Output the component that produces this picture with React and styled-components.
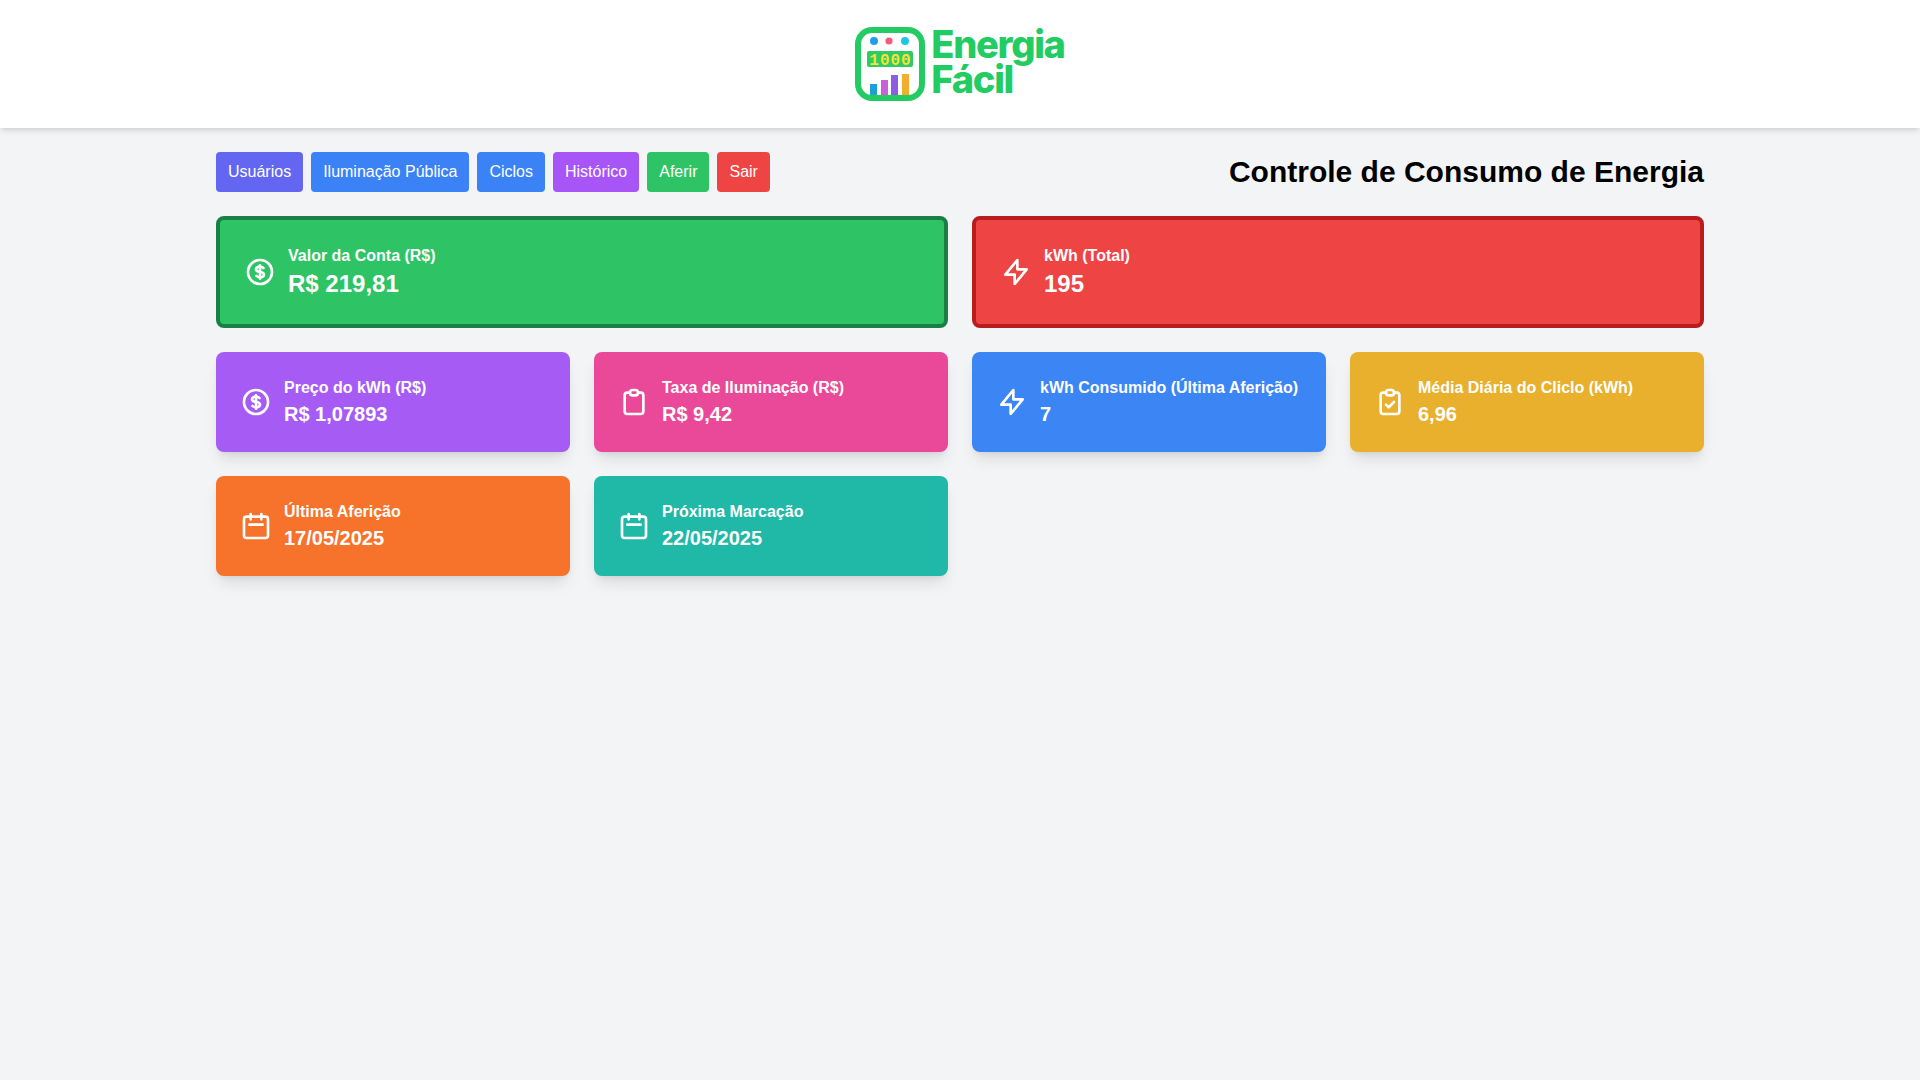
import styled, { createGlobalStyle } from "styled-components";
import {
  HiOutlineCurrencyDollar,
  HiOutlineLightningBolt,
  HiOutlineClipboard,
  HiOutlineClipboardCheck,
  HiOutlineCalendar,
} from "react-icons/hi";

const GlobalStyle = createGlobalStyle`
  * { box-sizing: border-box; }
  body {
    margin: 0;
    background: #f3f4f6;
    font-family: "Liberation Sans", Arial, sans-serif;
    color: #000;
  }
`;

const Header = styled.header`
  height: 128px;
  padding-bottom: 1px;
  background: #fff;
  box-shadow: 0 4px 6px -1px rgba(0, 0, 0, 0.1), 0 2px 4px -2px rgba(0, 0, 0, 0.1);
  display: flex;
  align-items: center;
  justify-content: center;
`;

const Logo = styled.div`
  display: flex;
  align-items: center;
  gap: 6px;
`;

const LogoText = styled.div`
  padding-bottom: 3px;
  font-family: Inter, sans-serif;
  font-weight: 800;
  font-size: 38px;
  line-height: 35px;
  letter-spacing: -1.3px;
  color: #22cc63;
`;

const Main = styled.main`
  width: 1536px;
  margin: 0 auto;
  padding: 24px;
`;

const TopRow = styled.div`
  display: flex;
  align-items: center;
  justify-content: space-between;
  margin-bottom: 24px;
`;

const Nav = styled.nav`
  display: flex;
  gap: 8px;
`;

const NavButton = styled.button`
  height: 40px;
  padding: 0 12px;
  border: 0;
  border-radius: 4px;
  background: ${(p) => p.$bg};
  color: #fff;
  font: 16px "Liberation Sans", Arial, sans-serif;
`;

const Title = styled.h1`
  margin: 0;
  font-size: 30px;
  line-height: 36px;
  font-weight: 700;
`;

const Grid = styled.div`
  display: grid;
  grid-template-columns: repeat(4, 1fr);
  gap: 24px;
`;

const Card = styled.div`
  grid-column: span ${(p) => (p.$big ? 2 : 1)};
  display: flex;
  align-items: center;
  gap: 12px;
  padding: 24px;
  border-radius: 8px;
  background: ${(p) => p.$bg};
  color: #fff;
  border: ${(p) => (p.$border ? `4px solid ${p.$border}` : "0")};
  box-shadow: ${(p) =>
    p.$border
      ? "none"
      : "0 10px 15px -3px rgba(0, 0, 0, 0.1), 0 4px 6px -4px rgba(0, 0, 0, 0.1)"};
`;

const Label = styled.div`
  font-size: 16px;
  line-height: 24px;
  font-weight: 700;
`;

const Value = styled.div`
  font-size: ${(p) => (p.$big ? "24px" : "20px")};
  line-height: ${(p) => (p.$big ? "32px" : "28px")};
  font-weight: 700;
`;

const MeterIcon = () => (
  <svg width="70" height="74" viewBox="0 0 70 74">
    <rect x="3" y="3" width="64" height="68" rx="14" fill="#fff" stroke="#22cc63" strokeWidth="6" />
    <circle cx="19" cy="14" r="4" fill="#1e9fe8" />
    <circle cx="34" cy="14" r="3.6" fill="#f25c7c" />
    <circle cx="50" cy="14" r="4" fill="#1ec6e6" />
    <rect x="12" y="24" width="46" height="16" rx="2" fill="#2ecc63" />
    <text x="35.5" y="38" textAnchor="middle" fontFamily="Liberation Mono, monospace" fontSize="16" fontWeight="700" letterSpacing="1" fill="#f5e13a">1000</text>
    <rect x="15" y="57" width="7" height="11" fill="#1e9fd8" />
    <rect x="26" y="53" width="7" height="15" fill="#c862d8" />
    <rect x="36" y="48" width="7" height="20" fill="#8d5fe0" />
    <rect x="47" y="47" width="7" height="21" fill="#f4ae2e" />
  </svg>
);

const buttons = [
  ["Usuários", "#6366f1"],
  ["Iluminação Pública", "#3b82f6"],
  ["Ciclos", "#3b82f6"],
  ["Histórico", "#a855f7"],
  ["Aferir", "#2ec466"],
  ["Sair", "#ef4444"],
];

const cards = [
  { Icon: HiOutlineCurrencyDollar, label: "Valor da Conta (R$)", value: "R$ 219,81", bg: "#2ec466", border: "#1a7f45", big: true },
  { Icon: HiOutlineLightningBolt, label: "kWh (Total)", value: "195", bg: "#ef4444", border: "#b91c1c", big: true },
  { Icon: HiOutlineCurrencyDollar, label: "Preço do kWh (R$)", value: "R$ 1,07893", bg: "#a65cf4" },
  { Icon: HiOutlineClipboard, label: "Taxa de Iluminação (R$)", value: "R$ 9,42", bg: "#ea4898" },
  { Icon: HiOutlineLightningBolt, label: "kWh Consumido (Última Aferição)", value: "7", bg: "#3b85f5" },
  { Icon: HiOutlineClipboardCheck, label: "Média Diária do Cliclo (kWh)", value: "6,96", bg: "#e9b02d" },
  { Icon: HiOutlineCalendar, label: "Última Aferição", value: "17/05/2025", bg: "#f7722a" },
  { Icon: HiOutlineCalendar, label: "Próxima Marcação", value: "22/05/2025", bg: "#20b8a6" },
];

export default function App() {
  return (
    <>
      <GlobalStyle />
      <Header>
        <Logo>
          <MeterIcon />
          <LogoText>
            Energia
            <br />
            Fácil
          </LogoText>
        </Logo>
      </Header>
      <Main>
        <TopRow>
          <Nav>
            {buttons.map(([text, bg]) => (
              <NavButton key={text} $bg={bg}>
                {text}
              </NavButton>
            ))}
          </Nav>
          <Title>Controle de Consumo de Energia</Title>
        </TopRow>
        <Grid>
          {cards.map(({ Icon, label, value, bg, border, big }) => (
            <Card key={label} $bg={bg} $border={border} $big={big}>
              <Icon size={32} />
              <div>
                <Label>{label}</Label>
                <Value $big={big}>{value}</Value>
              </div>
            </Card>
          ))}
        </Grid>
      </Main>
    </>
  );
}
